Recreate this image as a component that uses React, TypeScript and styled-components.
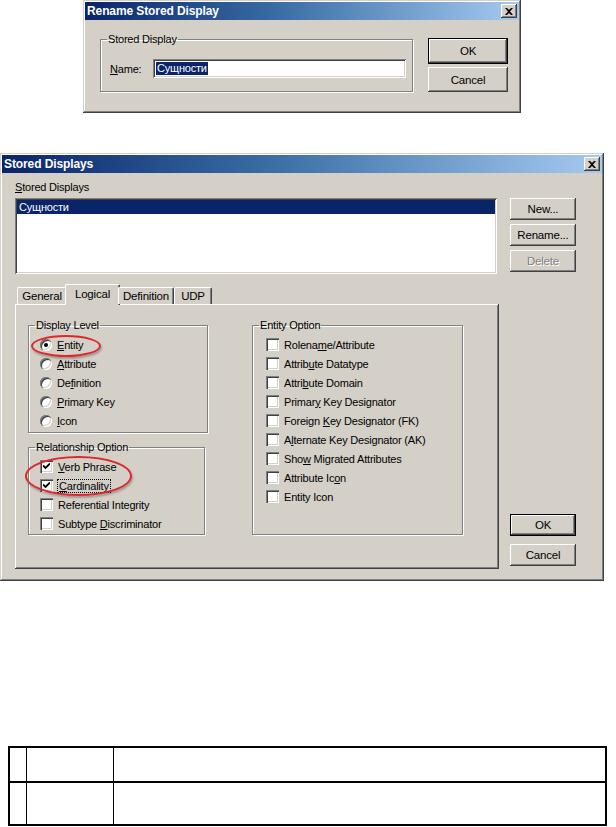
import React from 'react';
import styled, { createGlobalStyle } from 'styled-components';

const GlobalStyle = createGlobalStyle`
  html, body {
    margin: 0;
    padding: 0;
    background: #ffffff;
  }
  body {
    font-family: "Liberation Sans", Arial, sans-serif;
    font-size: 11px;
    letter-spacing: -0.2px;
    color: #000;
  }
`;

const Page = styled.div`
  width: 616px;
  height: 827px;
  overflow: hidden;
  display: flex;
  flex-direction: column;
`;

const Window = styled.div<{ $w: number; $h: number; $ml: number; $mt?: number }>`
  width: ${(p) => p.$w}px;
  height: ${(p) => p.$h}px;
  margin-left: ${(p) => p.$ml}px;
  margin-top: ${(p) => p.$mt ?? 0}px;
  box-sizing: border-box;
  padding: 2px;
  background: #d4d0c8;
  box-shadow: inset -1px -1px #404040, inset 1px 1px #d4d0c8,
    inset -2px -2px #808080, inset 2px 2px #ffffff;
  display: flex;
  flex-direction: column;
  flex-shrink: 0;
`;

const TitleBar = styled.div`
  height: 18px;
  padding: 0 2px 0 2px;
  display: flex;
  align-items: center;
  justify-content: space-between;
  background: linear-gradient(to right, #0a246a 0%, #3a6ea5 45%, #a6caf0 100%);
  color: #fff;
  font-weight: bold;
  font-size: 12px;
  letter-spacing: -0.1px;
  flex-shrink: 0;
`;

const CloseBtn = styled.div`
  width: 16px;
  height: 14px;
  box-sizing: border-box;
  background: #d4d0c8;
  box-shadow: inset -1px -1px #404040, inset 1px 1px #ffffff,
    inset -2px -2px #808080;
  display: flex;
  align-items: center;
  justify-content: center;
`;

const Button = styled.div<{ $default?: boolean; $disabled?: boolean; $w?: number; $h?: number }>`
  width: ${(p) => p.$w ?? 66}px;
  height: ${(p) => p.$h ?? 22}px;
  box-sizing: border-box;
  background: #d4d0c8;
  border: ${(p) => (p.$default ? '1px solid #000' : 'none')};
  box-shadow: inset -1px -1px #404040, inset 1px 1px #ffffff,
    inset -2px -2px #808080, inset 2px 2px #d4d0c8;
  display: flex;
  align-items: center;
  justify-content: center;
  color: ${(p) => (p.$disabled ? '#808080' : '#000')};
  text-shadow: ${(p) => (p.$disabled ? '1px 1px 0 #fff' : 'none')};
  font-size: 11.5px;
`;

const Group = styled.fieldset<{ $w: number; $h?: number; $pl: number }>`
  margin: 0;
  width: ${(p) => p.$w}px;
  ${(p) => (p.$h ? `height: ${p.$h}px;` : '')}
  box-sizing: border-box;
  min-width: 0;
  padding: 3px 4px 0 ${(p) => p.$pl}px;
  border: 1px solid #808080;
  box-shadow: inset 1px 1px #ffffff, 1px 1px #ffffff;
  display: flex;
  flex-direction: column;

  > legend {
    margin-left: ${(p) => 6 - p.$pl}px;
  }
`;

const Legend = styled.legend`
  padding: 0 1px;
  line-height: 13px;
  height: 13px;
`;

const U = styled.span`
  text-decoration: underline;
  text-underline-offset: 1px;
`;

/* ---------- Rename dialog ---------- */

const RenameBody = styled.div`
  display: flex;
  padding: 13px 0 0 15px;
  gap: 15px;
`;

const NameRow = styled.div`
  display: flex;
  align-items: center;
  padding: 10px 0 12px 0;
`;

const NameLabel = styled.span`
  width: 43px;
`;

const TextField = styled.div`
  width: 253px;
  height: 19px;
  box-sizing: border-box;
  background: #fff;
  box-shadow: inset 1px 1px #808080, inset -1px -1px #ffffff,
    inset 2px 2px #404040, inset -2px -2px #d4d0c8;
  display: flex;
  align-items: center;
  padding-left: 3px;
`;

const Selected = styled.span`
  background: #0a246a;
  color: #fff;
  padding: 0 1px;
  line-height: 13px;
`;

const ButtonCol = styled.div<{ $pt?: number; $gap: number; $end?: boolean }>`
  display: flex;
  flex-direction: column;
  gap: ${(p) => p.$gap}px;
  padding-top: ${(p) => p.$pt ?? 0}px;
  justify-content: ${(p) => (p.$end ? 'flex-end' : 'flex-start')};
  padding-bottom: ${(p) => (p.$end ? 3 : 0)}px;
`;

/* ---------- Stored Displays dialog ---------- */

const Body = styled.div`
  display: flex;
  flex-direction: column;
  padding: 8px 0 0 13px;
`;

const TopRow = styled.div`
  display: flex;
  gap: 13px;
`;

const ListCol = styled.div`
  display: flex;
  flex-direction: column;
  gap: 4px;
`;

const Caption = styled.div`
  line-height: 13px;
  height: 13px;
`;

const ListBox = styled.div`
  width: 482px;
  height: 76px;
  box-sizing: border-box;
  background: #fff;
  padding: 2px;
  box-shadow: inset 1px 1px #808080, inset -1px -1px #ffffff,
    inset 2px 2px #404040, inset -2px -2px #d4d0c8;
`;

const ListItem = styled.div<{ $sel?: boolean }>`
  height: 14px;
  line-height: 14px;
  padding-left: 2px;
  background: ${(p) => (p.$sel ? '#0a246a' : 'transparent')};
  color: ${(p) => (p.$sel ? '#fff' : '#000')};
`;

const BottomRow = styled.div`
  display: flex;
  gap: 11px;
  margin-top: 10px;
`;

const TabControl = styled.div`
  display: flex;
  flex-direction: column;
  width: 484px;
`;

const TabStrip = styled.div`
  display: flex;
  align-items: flex-end;
  height: 20px;
  padding-left: 2px;
  position: relative;
  z-index: 1;
`;

const Tab = styled.div<{ $active?: boolean; $w: number }>`
  width: ${(p) => p.$w}px;
  height: ${(p) => (p.$active ? 21 : 17)}px;
  box-sizing: border-box;
  margin: ${(p) => (p.$active ? '0 -2px -1px -2px' : '0')};
  background: #d4d0c8;
  border-top: 1px solid #ffffff;
  border-left: 1px solid #ffffff;
  border-right: 1px solid #404040;
  border-radius: 2px 2px 0 0;
  box-shadow: inset -1px 0 #808080;
  display: flex;
  align-items: center;
  justify-content: center;
  padding-bottom: ${(p) => (p.$active ? 3 : 0)}px;
  font-size: 11.5px;
`;

const Panel = styled.div`
  height: 265px;
  box-sizing: border-box;
  position: relative;
  background: #d4d0c8;
  box-shadow: inset -1px -1px #404040, inset 1px 1px #ffffff,
    inset -2px -2px #808080;
  display: flex;
  gap: 44px;
  padding: 15px 0 0 13px;
`;

const GroupCol = styled.div`
  display: flex;
  flex-direction: column;
  gap: 8px;
`;

const OptionRow = styled.div`
  height: 19px;
  display: flex;
  align-items: center;
  gap: 5px;
  white-space: nowrap;
`;

const Radio = styled.span<{ $on?: boolean }>`
  width: 12px;
  height: 12px;
  box-sizing: border-box;
  border-radius: 50%;
  background: #fff;
  box-shadow: inset 1px 1px #808080, inset 2px 2px #404040,
    inset -1px -1px #ffffff, inset -2px -2px #d4d0c8;
  display: flex;
  align-items: center;
  justify-content: center;
  flex-shrink: 0;

  &::after {
    content: '';
    width: 4px;
    height: 4px;
    border-radius: 50%;
    background: ${(p) => (p.$on ? '#000' : 'transparent')};
  }
`;

const Check = styled.span`
  width: 13px;
  height: 13px;
  box-sizing: border-box;
  background: #fff;
  box-shadow: inset 1px 1px #808080, inset 2px 2px #404040,
    inset -1px -1px #ffffff, inset -2px -2px #d4d0c8;
  display: flex;
  align-items: center;
  justify-content: center;
  flex-shrink: 0;
`;

const Focus = styled.span`
  outline: 1px dotted #000;
  outline-offset: 0;
  padding: 0 1px;
`;

const Ellipse = styled.div<{ $l: number; $t: number; $w: number; $h: number }>`
  position: absolute;
  left: ${(p) => p.$l}px;
  top: ${(p) => p.$t}px;
  width: ${(p) => p.$w}px;
  height: ${(p) => p.$h}px;
  box-sizing: border-box;
  border: 2px solid #e0262a;
  border-radius: 50%;
  box-shadow: 1px 2px 2px rgba(0, 0, 0, 0.25);
  pointer-events: none;
`;

/* ---------- bottom table ---------- */

const Table = styled.div`
  margin: 165px 0 0 8px;
  width: 599px;
  box-sizing: border-box;
  border: 2px solid #000;
  display: grid;
  grid-template-columns: 16px 87px 1fr;
  grid-template-rows: 33px 43px;
`;

const Cell = styled.div<{ $col: number; $row: number }>`
  border-left: ${(p) => (p.$col > 0 ? '1px solid #000' : 'none')};
  border-top: ${(p) => (p.$row > 0 ? '2px solid #000' : 'none')};
`;

const CloseIcon = () => (
  <svg width="8" height="7" viewBox="0 0 8 7">
    <path d="M0 0 L2 0 L4 2 L6 0 L8 0 L5 3.5 L8 7 L6 7 L4 5 L2 7 L0 7 L3 3.5 Z" fill="#000" />
  </svg>
);

const CheckMark = () => (
  <svg width="7" height="7" viewBox="0 0 7 7">
    <path d="M0 2.5 L2.5 5 L7 0.5" stroke="#000" strokeWidth="1.8" fill="none" />
  </svg>
);

type Opt = { label: React.ReactNode; on?: boolean };

const Radios: React.FC<{ items: Opt[] }> = ({ items }) => (
  <>
    {items.map((it, i) => (
      <OptionRow key={i}>
        <Radio $on={it.on} />
        <span>{it.label}</span>
      </OptionRow>
    ))}
  </>
);

const Checks: React.FC<{ items: Opt[] }> = ({ items }) => (
  <>
    {items.map((it, i) => (
      <OptionRow key={i}>
        <Check>{it.on && <CheckMark />}</Check>
        <span>{it.label}</span>
      </OptionRow>
    ))}
  </>
);

const mn = (pre: string, key: string, post: string) => (
  <>
    {pre}
    <U>{key}</U>
    {post}
  </>
);

export default function App() {
  const levels: Opt[] = [
    { label: mn('', 'E', 'ntity'), on: true },
    { label: mn('', 'A', 'ttribute') },
    { label: mn('De', 'f', 'inition') },
    { label: mn('', 'P', 'rimary Key') },
    { label: mn('', 'I', 'con') },
  ];
  const rel: Opt[] = [
    { label: mn('', 'V', 'erb Phrase'), on: true },
    { label: <Focus>{mn('', 'C', 'ardinality')}</Focus>, on: true },
    { label: 'Referential Integrity' },
    { label: mn('Subtype ', 'D', 'iscriminator') },
  ];
  const ent: Opt[] = [
    { label: mn('Rolena', 'm', 'e/Attribute') },
    { label: mn('Attrib', 'u', 'te Datatype') },
    { label: mn('Attri', 'b', 'ute Domain') },
    { label: mn('Primar', 'y', ' Key Designator') },
    { label: mn('Foreign ', 'K', 'ey Designator (FK)') },
    { label: mn('A', 'l', 'ternate Key Designator (AK)') },
    { label: mn('Sho', 'w', ' Migrated Attributes') },
    { label: mn('Attribute Ic', 'o', 'n') },
    { label: 'Entity Icon' },
  ];

  return (
    <Page>
      <GlobalStyle />
      <Window $w={438} $h={113} $ml={83}>
        <TitleBar>
          <span>Rename Stored Display</span>
          <CloseBtn>
            <CloseIcon />
          </CloseBtn>
        </TitleBar>
        <RenameBody>
          <Group $w={313} $pl={9}>
            <Legend>Stored Display</Legend>
            <NameRow>
              <NameLabel>{mn('', 'N', 'ame:')}</NameLabel>
              <TextField>
                <Selected>Сущности</Selected>
              </TextField>
            </NameRow>
          </Group>
          <ButtonCol $pt={5} $gap={3}>
            <Button $default $w={80} $h={26}>OK</Button>
            <Button $w={80} $h={25}>Cancel</Button>
          </ButtonCol>
        </RenameBody>
      </Window>

      <Window $w={604} $h={428} $ml={0} $mt={40}>
        <TitleBar>
          <span>Stored Displays</span>
          <CloseBtn>
            <CloseIcon />
          </CloseBtn>
        </TitleBar>
        <Body>
          <TopRow>
            <ListCol>
              <Caption>{mn('', 'S', 'tored Displays')}</Caption>
              <ListBox>
                <ListItem $sel>Сущности</ListItem>
              </ListBox>
            </ListCol>
            <ButtonCol $pt={17} $gap={4}>
              <Button>New...</Button>
              <Button>Rename...</Button>
              <Button $disabled>Delete</Button>
            </ButtonCol>
          </TopRow>
          <BottomRow>
            <TabControl>
              <TabStrip>
                <Tab $w={50}>General</Tab>
                <Tab $w={55} $active>Logical</Tab>
                <Tab $w={56}>Definition</Tab>
                <Tab $w={38}>UDP</Tab>
              </TabStrip>
              <Panel>
                <GroupCol>
                  <Group $w={180} $h={114} $pl={11}>
                    <Legend>Display Level</Legend>
                    <Radios items={levels} />
                  </Group>
                  <Group $w={177} $h={94} $pl={11}>
                    <Legend>Relationship Option</Legend>
                    <Checks items={rel} />
                  </Group>
                </GroupCol>
                <Group $w={211} $h={216} $pl={13}>
                  <Legend>Entity Option</Legend>
                  <Checks items={ent} />
                </Group>
                <Ellipse $l={16} $t={31} $w={70} $h={22} />
                <Ellipse $l={10} $t={152} $w={107} $h={40} />
              </Panel>
            </TabControl>
            <ButtonCol $gap={8} $end>
              <Button $default>OK</Button>
              <Button>Cancel</Button>
            </ButtonCol>
          </BottomRow>
        </Body>
      </Window>

      <Table>
        <Cell $col={0} $row={0} />
        <Cell $col={1} $row={0} />
        <Cell $col={2} $row={0} />
        <Cell $col={0} $row={1} />
        <Cell $col={1} $row={1} />
        <Cell $col={2} $row={1} />
      </Table>
    </Page>
  );
}
